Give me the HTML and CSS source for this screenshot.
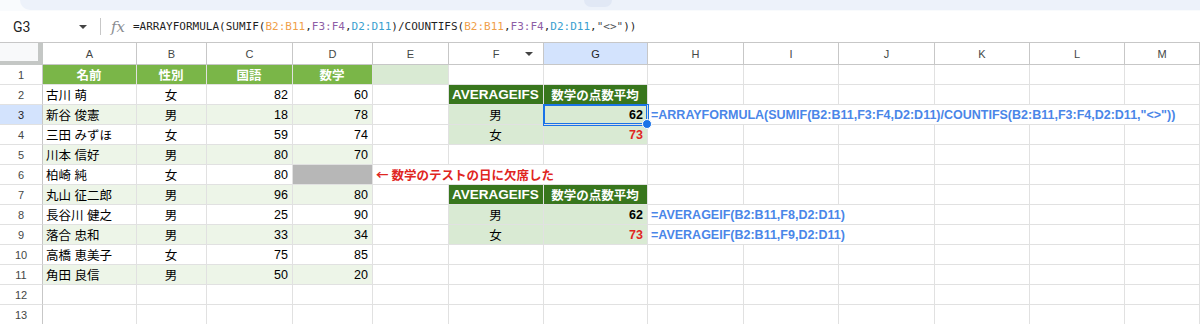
FILE: index.html
```html
<!DOCTYPE html>
<html lang="ja">
<head>
    <meta charset="UTF-8">
    <title>AVERAGEIFS - Sheet</title>
    <link rel="stylesheet" href="styles.css">
</head>
<body>
    <div class="toolbar-edge">
        <div class="toolbar-pill"><span class="toolbar-btn"></span></div>
    </div>

    <div class="formula-bar">
        <div class="name-box">
            <span class="name">G3</span>
            <span class="caret"></span>
        </div>
        <div class="divider"></div>
        <div class="fx">fx</div>
        <div class="formula">=ARRAYFORMULA(SUMIF(<span class="ref-b">B2:B11</span>,<span class="ref-f">F3:F4</span>,<span class="ref-d">D2:D11</span>)/COUNTIFS(<span class="ref-b">B2:B11</span>,<span class="ref-f">F3:F4</span>,<span class="ref-d">D2:D11</span>,<span class="str">"&lt;&gt;"</span>))</div>
    </div>

    <div class="sheet">
        <!-- column headers -->
        <div class="corner"></div>
        <div class="ch">A</div>
        <div class="ch">B</div>
        <div class="ch">C</div>
        <div class="ch">D</div>
        <div class="ch">E</div>
        <div class="ch filter">F<span class="filter-caret"></span></div>
        <div class="ch active">G</div>
        <div class="ch">H</div>
        <div class="ch">I</div>
        <div class="ch">J</div>
        <div class="ch">K</div>
        <div class="ch">L</div>
        <div class="ch">M</div>

        <!-- row 1 -->
        <div class="rh">1</div>
        <div class="cell head c">名前</div>
        <div class="cell head c">性別</div>
        <div class="cell head c">国語</div>
        <div class="cell head c">数学</div>
        <div class="cell light"></div>
        <div class="cell"></div><div class="cell"></div><div class="cell"></div><div class="cell"></div>
        <div class="cell"></div><div class="cell"></div><div class="cell"></div><div class="cell"></div>

        <!-- row 2 -->
        <div class="rh">2</div>
        <div class="cell">古川 萌</div>
        <div class="cell c">女</div>
        <div class="cell r">82</div>
        <div class="cell r">60</div>
        <div class="cell"></div>
        <div class="cell dark c">AVERAGEIFS</div>
        <div class="cell dark c small">数学の点数平均</div>
        <div class="cell"></div><div class="cell"></div><div class="cell"></div>
        <div class="cell"></div><div class="cell"></div><div class="cell"></div>

        <!-- row 3 -->
        <div class="rh active">3</div>
        <div class="cell stripe">新谷 俊憲</div>
        <div class="cell stripe c">男</div>
        <div class="cell stripe r">18</div>
        <div class="cell stripe r">78</div>
        <div class="cell"></div>
        <div class="cell light c">男</div>
        <div class="cell light r bold selected">62</div>
        <div class="cell note-formula span-6">=ARRAYFORMULA(SUMIF(B2:B11,F3:F4,D2:D11)/COUNTIFS(B2:B11,F3:F4,D2:D11,"&lt;&gt;"))</div>

        <!-- row 4 -->
        <div class="rh">4</div>
        <div class="cell">三田 みずほ</div>
        <div class="cell c">女</div>
        <div class="cell r">59</div>
        <div class="cell r">74</div>
        <div class="cell"></div>
        <div class="cell light c">女</div>
        <div class="cell light r bold red">73</div>
        <div class="cell"></div><div class="cell"></div><div class="cell"></div>
        <div class="cell"></div><div class="cell"></div><div class="cell"></div>

        <!-- row 5 -->
        <div class="rh">5</div>
        <div class="cell stripe">川本 信好</div>
        <div class="cell stripe c">男</div>
        <div class="cell stripe r">80</div>
        <div class="cell stripe r">70</div>
        <div class="cell"></div><div class="cell"></div><div class="cell"></div>
        <div class="cell"></div><div class="cell"></div><div class="cell"></div>
        <div class="cell"></div><div class="cell"></div><div class="cell"></div>

        <!-- row 6 -->
        <div class="rh">6</div>
        <div class="cell">柏崎 純</div>
        <div class="cell c">女</div>
        <div class="cell r">80</div>
        <div class="cell missing"></div>
        <div class="cell note span-3"><span class="arrow">←</span> 数学のテストの日に欠席した</div>
        <div class="cell"></div><div class="cell"></div><div class="cell"></div>
        <div class="cell"></div><div class="cell"></div><div class="cell"></div>

        <!-- row 7 -->
        <div class="rh">7</div>
        <div class="cell stripe">丸山 征二郎</div>
        <div class="cell stripe c">男</div>
        <div class="cell stripe r">96</div>
        <div class="cell stripe r">80</div>
        <div class="cell"></div>
        <div class="cell dark c">AVERAGEIFS</div>
        <div class="cell dark c small">数学の点数平均</div>
        <div class="cell"></div><div class="cell"></div><div class="cell"></div>
        <div class="cell"></div><div class="cell"></div><div class="cell"></div>

        <!-- row 8 -->
        <div class="rh">8</div>
        <div class="cell">長谷川 健之</div>
        <div class="cell c">男</div>
        <div class="cell r">25</div>
        <div class="cell r">90</div>
        <div class="cell"></div>
        <div class="cell light c">男</div>
        <div class="cell light r bold">62</div>
        <div class="cell note-formula span-3">=AVERAGEIF(B2:B11,F8,D2:D11)</div>
        <div class="cell"></div><div class="cell"></div><div class="cell"></div>

        <!-- row 9 -->
        <div class="rh">9</div>
        <div class="cell stripe">落合 忠和</div>
        <div class="cell stripe c">男</div>
        <div class="cell stripe r">33</div>
        <div class="cell stripe r">34</div>
        <div class="cell"></div>
        <div class="cell light c">女</div>
        <div class="cell light r bold red">73</div>
        <div class="cell note-formula span-3">=AVERAGEIF(B2:B11,F9,D2:D11)</div>
        <div class="cell"></div><div class="cell"></div><div class="cell"></div>

        <!-- row 10 -->
        <div class="rh">10</div>
        <div class="cell">高橋 恵美子</div>
        <div class="cell c">女</div>
        <div class="cell r">75</div>
        <div class="cell r">85</div>
        <div class="cell"></div><div class="cell"></div><div class="cell"></div>
        <div class="cell"></div><div class="cell"></div><div class="cell"></div>
        <div class="cell"></div><div class="cell"></div><div class="cell"></div>

        <!-- row 11 -->
        <div class="rh">11</div>
        <div class="cell stripe">角田 良信</div>
        <div class="cell stripe c">男</div>
        <div class="cell stripe r">50</div>
        <div class="cell stripe r">20</div>
        <div class="cell"></div><div class="cell"></div><div class="cell"></div>
        <div class="cell"></div><div class="cell"></div><div class="cell"></div>
        <div class="cell"></div><div class="cell"></div><div class="cell"></div>

        <!-- row 12 -->
        <div class="rh">12</div>
        <div class="cell"></div><div class="cell"></div><div class="cell"></div><div class="cell"></div>
        <div class="cell"></div><div class="cell"></div><div class="cell"></div>
        <div class="cell"></div><div class="cell"></div><div class="cell"></div>
        <div class="cell"></div><div class="cell"></div><div class="cell"></div>

        <!-- row 13 -->
        <div class="rh">13</div>
        <div class="cell"></div><div class="cell"></div><div class="cell"></div><div class="cell"></div>
        <div class="cell"></div><div class="cell"></div><div class="cell"></div>
        <div class="cell"></div><div class="cell"></div><div class="cell"></div>
        <div class="cell"></div><div class="cell"></div><div class="cell"></div>
    </div>
</body>
</html>
```

FILE: styles.css
```css
* {
    box-sizing: border-box;
}

body {
    margin: 0;
    width: 1200px;
    height: 324px;
    overflow: hidden;
    background: #fff;
    font-family: "Liberation Sans", Arial, "Noto Sans CJK JP", sans-serif;
    color: #000;
}

/* bottom edge of the toolbar */
.toolbar-edge {
    height: 11px;
    background: #f9fbfd;
}

.toolbar-pill {
    height: 10px;
    margin-left: 20px;
    background: #edf2fa;
    border-radius: 0 0 0 14px;
    position: relative;
}

.toolbar-btn {
    position: absolute;
    left: 564px;
    top: 0;
    width: 28px;
    height: 7px;
    background: #e1e8f5;
    border-radius: 0 0 8px 8px;
}

/* formula bar */
.formula-bar {
    height: 31px;
    display: flex;
    align-items: center;
    font-size: 14px;
}

.name-box {
    width: 100px;
    display: flex;
    align-items: center;
    padding-left: 13px;
    padding-right: 13px;
}

.name {
    flex: 1;
    font-family: Roboto, "Liberation Sans", sans-serif;
    font-size: 14px;
    color: #1f1f1f;
}

.caret {
    width: 0;
    height: 0;
    border-left: 4px solid transparent;
    border-right: 4px solid transparent;
    border-top: 4px solid #444;
}

.divider {
    width: 1px;
    height: 17px;
    background: #c7c7c7;
}

.fx {
    width: 32px;
    padding-left: 10px;
    font-family: "DejaVu Serif", "Liberation Serif", serif;
    font-style: italic;
    font-size: 15px;
    color: #8a8d91;
}

.formula {
    font-family: "DejaVu Sans Mono", "Liberation Mono", monospace;
    font-size: 11px;
    color: #1f1f1f;
    white-space: nowrap;
}

.ref-b { color: #f0a04a; }
.ref-f { color: #8e5ea6; }
.ref-d { color: #3a9fd0; }
.str { color: #4d5156; }

/* grid */
.sheet {
    display: grid;
    grid-template-columns: 43px 94px 70px 86px 80px 76px 95px 104px 96px 95px 96px 95px 95px 75px;
    grid-template-rows: 22px;
    grid-auto-rows: 20px;
    border-top: 1px solid #c7c7c7;
    font-size: 12.5px;
}

.corner {
    background: #f8f9fa;
    box-shadow: inset -5px -4px 0 #c4c7c5;
}

.ch {
    display: flex;
    align-items: center;
    justify-content: center;
    font-size: 11px;
    color: #444746;
    border-right: 1px solid #c7c7c7;
    border-bottom: 1px solid #c7c7c7;
}

.ch.active {
    background: #d3e3fd;
    color: #1f1f1f;
}

.ch.filter {
    position: relative;
}

.filter-caret {
    position: absolute;
    right: 10px;
    top: 9px;
    border-left: 4px solid transparent;
    border-right: 4px solid transparent;
    border-top: 4px solid #444;
}

.rh {
    display: flex;
    align-items: center;
    justify-content: center;
    font-size: 11px;
    color: #444746;
    border-right: 1px solid #c7c7c7;
    border-bottom: 1px solid #e1e1e1;
}

.rh.active {
    background: #d3e3fd;
    color: #1f1f1f;
}

.cell {
    display: flex;
    align-items: center;
    padding: 0 4px 0 3px;
    white-space: nowrap;
    border-right: 1px solid #e1e1e1;
    border-bottom: 1px solid #e1e1e1;
}

.c { justify-content: center; }
.r { justify-content: flex-end; }
.bold { font-weight: bold; }

.head {
    background: #7ab648;
    color: #fff;
    font-weight: bold;
}

.light { background: #d9ead3; }
.stripe { background: #edf5e8; }
.missing { background: #b7b7b7; }

.dark {
    background: #38761d;
    color: #fff;
    font-weight: bold;
    font-size: 13.5px;
}

.dark.small { font-size: 12.5px; }

.red { color: #e0261f; }

.note {
    color: #e0261f;
    font-weight: bold;
}

.arrow {
    font-family: "Noto Sans CJK JP", sans-serif;
    margin-right: 3px;
}

.note-formula {
    color: #4a86e8;
    font-weight: bold;
}

.span-3 { grid-column: span 3; }
.span-6 { grid-column: span 6; }

.selected {
    position: relative;
    z-index: 1;
    box-shadow: 0 0 0 1px #1a73e8, inset 0 0 0 1px #1a73e8;
}

.selected::after {
    content: "";
    position: absolute;
    right: -5px;
    bottom: -5px;
    width: 8px;
    height: 8px;
    border-radius: 50%;
    background: #1a73e8;
    border: 1px solid #fff;
}
```
